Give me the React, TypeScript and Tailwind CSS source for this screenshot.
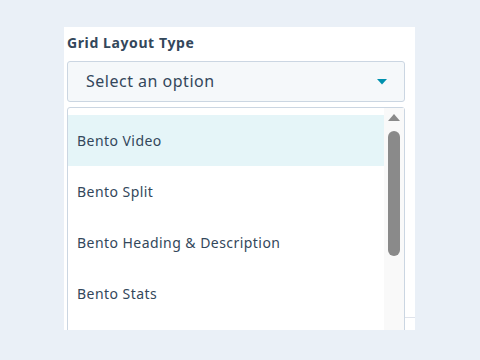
import React from "react";

const items = ["Bento Video", "Bento Split", "Bento Heading & Description", "Bento Stats"];

export default function App() {
  return (
    <div
      className="w-[480px] h-[360px] bg-[#eaf0f7] pt-[27px] pl-[64px] text-[#33475b]"
      style={{ fontFamily: '"Noto Sans", "Open Sans", sans-serif' }}
    >
      <div className="relative w-[351px] h-[303px] bg-white overflow-hidden pl-[3px] pt-[6px]">
        <div className="text-[14px] font-bold leading-[20px] tracking-[0.6px]">Grid Layout Type</div>
        <div className="mt-[8px] w-[338px] h-[41px] border border-[#cbd6e2] rounded-[3px] bg-[#f5f8fa] flex items-center justify-between pl-[18px] pr-[17px]">
          <span className="text-[16px] leading-[20px] tracking-[0.5px] -mt-[2px]">Select an option</span>
          <svg width="10" height="6" viewBox="0 0 10 6">
            <path d="M0 0 L10 0 L5 5.5 Z" fill="#0091ae" />
          </svg>
        </div>
        <div className="mt-[215px] border-t border-[#dfe3eb]" />
        <div className="absolute left-[3px] top-[80px] w-[338px] h-[260px] bg-white border border-[#cbd6e2] rounded-[3px] flex">
          <div className="flex-1 pt-[7px] flex flex-col">
            {items.map((t, i) => (
              <div
                key={t}
                className={
                  "h-[51px] shrink-0 flex items-center pl-[9px] text-[14px] tracking-[0.45px] " +
                  (i === 0 ? "bg-[#e5f5f8]" : "")
                }
              >
                {t}
              </div>
            ))}
          </div>
          <div className="w-[20px] bg-[#f9f9f9] flex flex-col items-center pt-[6px]">
            <svg width="12" height="8" viewBox="0 0 12 8">
              <path d="M6 0 L12 7 L0 7 Z" fill="#8a8a8a" />
            </svg>
            <div className="mt-[9px] w-[12px] h-[125px] rounded-[6px] bg-[#8a8a8a]" />
          </div>
        </div>
      </div>
    </div>
  );
}
